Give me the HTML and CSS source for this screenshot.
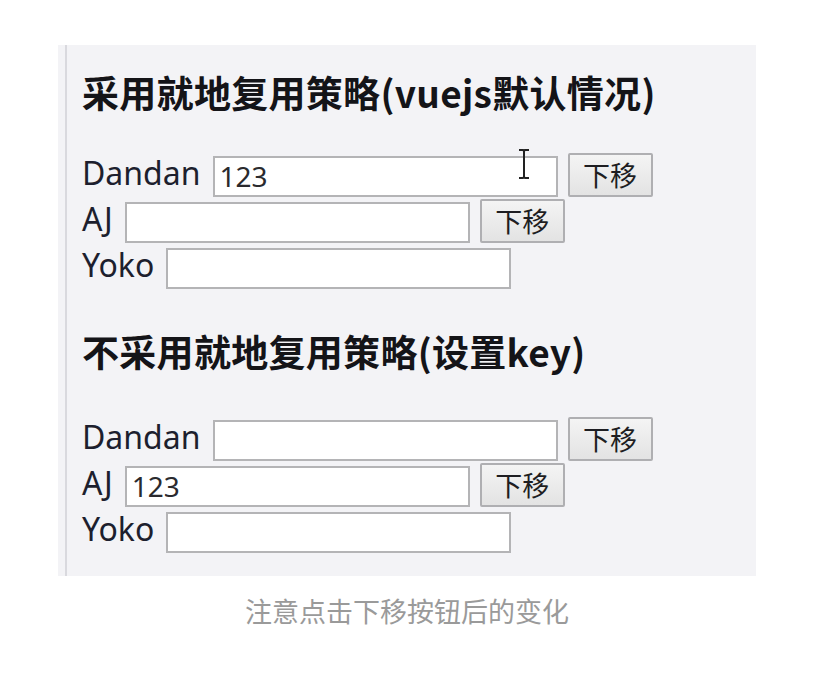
FILE: index.html
```html
<!DOCTYPE html>
<html lang="zh">
<head>
<meta charset="utf-8">
<title>vuejs key demo</title>
<link rel="stylesheet" href="styles.css">
</head>
<body>
<figure class="figure">
  <div class="panel">
    <div class="inner">
      <h2 class="title title-first">采用就地复用策略(vuejs默认情况)</h2>
      <div class="list">
        <div class="row">
          <span class="label">Dandan</span>
          <span class="field">123</span>
          <button class="btn">下移</button>
        </div>
        <div class="row">
          <span class="label">AJ</span>
          <span class="field"></span>
          <button class="btn">下移</button>
        </div>
        <div class="row">
          <span class="label">Yoko</span>
          <span class="field"></span>
        </div>
      </div>
      <h2 class="title title-second">不采用就地复用策略(设置key)</h2>
      <div class="list">
        <div class="row">
          <span class="label">Dandan</span>
          <span class="field"></span>
          <button class="btn">下移</button>
        </div>
        <div class="row">
          <span class="label">AJ</span>
          <span class="field">123</span>
          <button class="btn">下移</button>
        </div>
        <div class="row">
          <span class="label">Yoko</span>
          <span class="field"></span>
        </div>
      </div>
    </div>
    <svg class="ibeam" width="16" height="32" viewBox="0 0 16 32" aria-hidden="true">
      <path d="M3 2h4l1 1 1-1h4M8 3v26M3 30h4l1-1 1 1h4" fill="none" stroke="#222" stroke-width="2"/>
    </svg>
  </div>
  <figcaption class="caption">注意点击下移按钮后的变化</figcaption>
</figure>
</body>
</html>
```
FILE: styles.css
```css
html, body {
  margin: 0;
  padding: 0;
  background: #ffffff;
}

.figure {
  margin: 45px 0 0 58px;
  width: 698px;
}

.panel {
  position: relative;
  background: #f3f3f6;
  padding: 0 0 0 7px;
  height: 531px;
  box-sizing: border-box;
}

.inner {
  height: 100%;
  border-left: 2px solid #d9d9de;
  padding: 25px 0 0 15px;
  box-sizing: border-box;
}

.title {
  margin: 0;
  font-family: "Noto Sans CJK SC", "Noto Sans", sans-serif;
  font-weight: 700;
  font-size: 37px;
  letter-spacing: 0.3px;
  line-height: 44px;
  height: 44px;
  color: #141418;
  white-space: nowrap;
}

.title-first {
  margin-bottom: 37px;
}

.title-second {
  margin-top: 40px;
  margin-bottom: 42px;
}

.list {
  display: flex;
  flex-direction: column;
}

.row {
  display: flex;
  align-items: flex-end;
  height: 46px;
}

.label {
  font-family: "Noto Sans", "Open Sans", sans-serif;
  font-size: 32px;
  line-height: 40px;
  color: #1d1f2e;
  margin-right: 12px;
  padding-bottom: 4px;
}

.field {
  display: block;
  width: 345px;
  height: 41px;
  box-sizing: border-box;
  background: #ffffff;
  border: 2px solid #b4b4b6;
  padding: 0 0 0 5px;
  font-family: "Noto Sans", "Open Sans", sans-serif;
  font-size: 28px;
  line-height: 37px;
  color: #2a2a2e;
}

.btn {
  display: block;
  width: 85px;
  height: 44px;
  margin: 0 0 0 10px;
  box-sizing: border-box;
  border: 2px solid #afafb2;
  border-radius: 2px;
  background: linear-gradient(#f4f4f4, #e3e3e3);
  font-family: "Noto Sans CJK SC", sans-serif;
  font-size: 27px;
  line-height: 38px;
  color: #1e1e22;
  padding: 0;
}

.ibeam {
  position: absolute;
  left: 458px;
  top: 103px;
}

.caption {
  margin: 0;
  padding-top: 15px;
  text-align: center;
  font-family: "Noto Sans CJK SC", sans-serif;
  font-size: 27px;
  line-height: 40px;
  color: #9a9a9a;
}
```
